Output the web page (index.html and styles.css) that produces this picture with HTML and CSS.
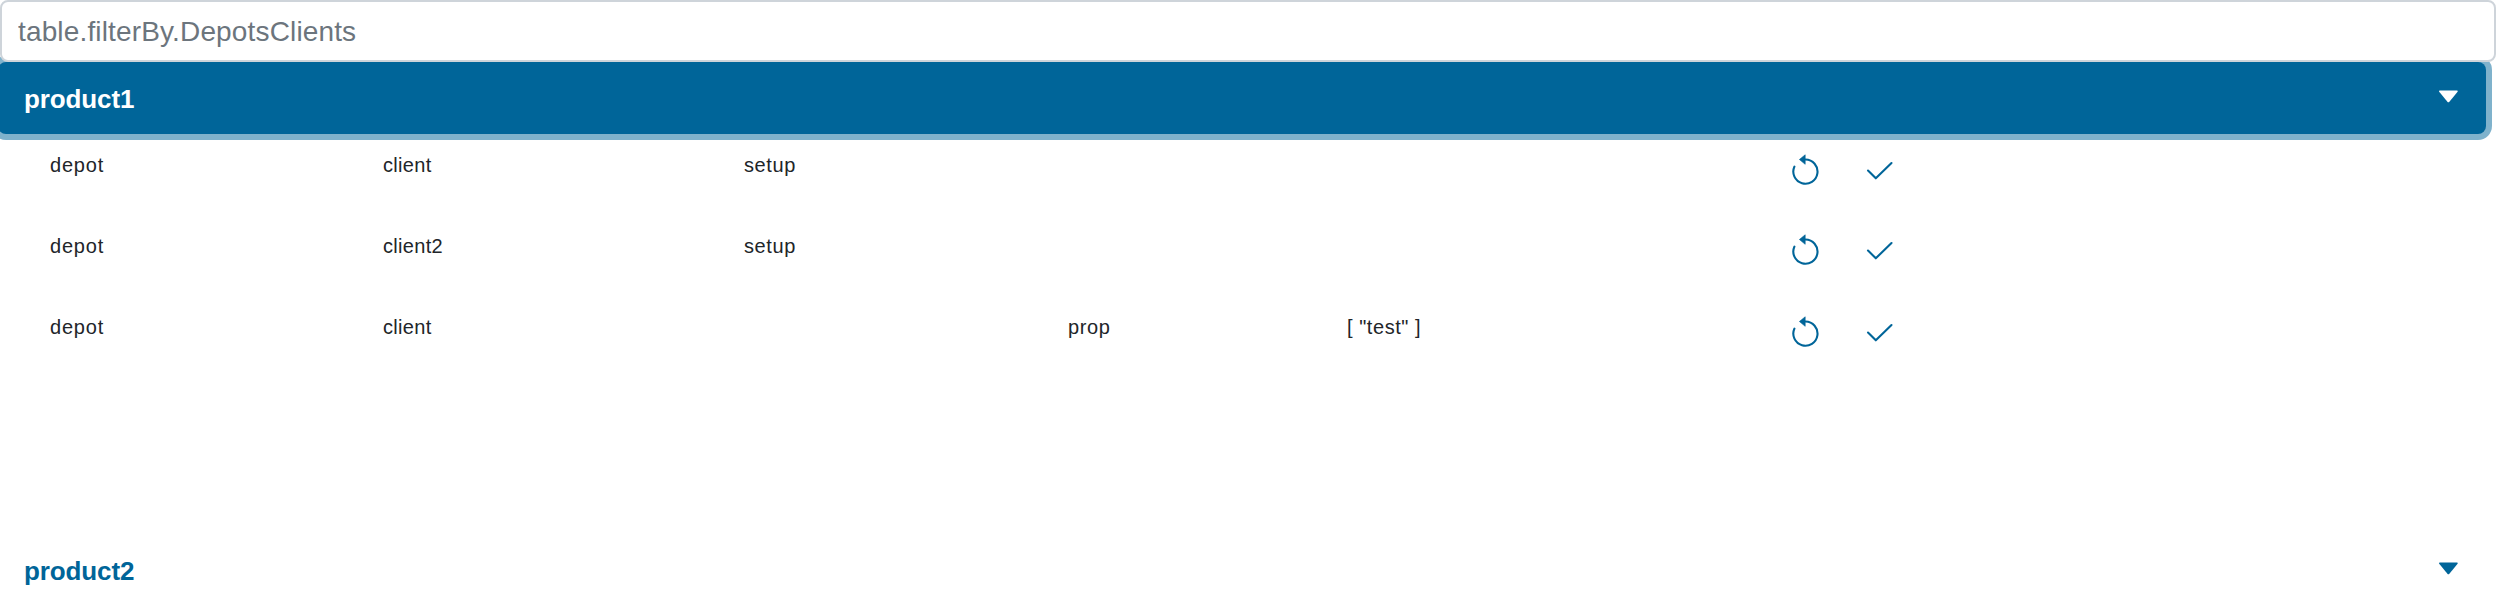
FILE: index.html
```html
<!DOCTYPE html>
<html lang="en">
<head>
<meta charset="utf-8">
<title>Depots and clients</title>
<link rel="stylesheet" href="styles.css">
</head>
<body>
<svg class="defs" aria-hidden="true">
  <symbol id="reset" viewBox="0 0 28 32">
    <path d="M3.4 12.6A12.1 12.1 0 1 0 14.5 5.5" fill="none" stroke="currentColor" stroke-width="2.1" stroke-linecap="round"/>
    <path d="M14.2 .8V10.3L8.4 5.5Z" fill="currentColor" stroke="currentColor" stroke-width=".6" stroke-linejoin="round"/>
  </symbol>
  <symbol id="check" viewBox="0 0 28 20">
    <path d="M2 9.5L9.8 17.3L25.5 2" fill="none" stroke="currentColor" stroke-width="2.1" stroke-linecap="round" stroke-linejoin="round"/>
  </symbol>
  <symbol id="caret" viewBox="0 0 20 14">
    <path d="M1.7 .6H19.1Q20.1 .9 19.4 2.1L11.4 11.8Q10.4 12.9 9.4 11.8L1.4 2.1Q.6 .9 1.7 .6Z" fill="currentColor"/>
  </symbol>
</svg>
<main class="page">
  <input class="filter" type="text" placeholder="table.filterBy.DepotsClients" aria-label="Filter">
  <button class="product product-open" type="button">product1<svg class="caret"><use href="#caret"/></svg></button>
  <div class="rows">
    <div class="row"><span class="depot">depot</span><span>client</span><span class="setup">setup</span><span></span><span></span><svg class="reset"><use href="#reset"/></svg><svg class="check"><use href="#check"/></svg></div>
    <div class="row row-middle"><span class="depot">depot</span><span>client2</span><span class="setup">setup</span><span></span><span></span><svg class="reset"><use href="#reset"/></svg><svg class="check"><use href="#check"/></svg></div>
    <div class="row row-last"><span class="depot">depot</span><span>client</span><span></span><span class="setup">prop</span><span class="value">[ "test" ]</span><svg class="reset"><use href="#reset"/></svg><svg class="check"><use href="#check"/></svg></div>
  </div>
  <button class="product" type="button">product2<svg class="caret"><use href="#caret"/></svg></button>
</main>
</body>
</html>
```
FILE: styles.css
```css
* { box-sizing: border-box; }
body {
  margin: 0;
  background: #fff;
  color: #212529;
  font-family: "Liberation Sans", Arial, sans-serif;
  overflow: hidden;
}
.defs { display: none; }
.page { display: flex; flex-direction: column; height: 606px; }
.filter {
  position: relative;
  z-index: 1;
  flex: none;
  width: 100%;
  height: 62px;
  padding: 2px 16px 0;
  border: 2px solid #ced4da;
  border-radius: 8px;
  background: #fff;
  font: 28px "Liberation Sans", Arial, sans-serif;
  letter-spacing: .15px;
}
.filter::placeholder { color: #6c757d; opacity: 1; }
.product {
  flex: none;
  display: flex;
  align-items: center;
  justify-content: space-between;
  width: 2488px;
  height: 72px;
  margin: 0 0 0 -2px;
  padding: 2px 28px 0 26px;
  border: 0;
  border-radius: 8px;
  background: transparent;
  color: #006599;
  font: bold 26px "Liberation Sans", Arial, sans-serif;
  letter-spacing: -.12px;
}
.product-open {
  background: #006599;
  color: #fff;
  box-shadow: 0 0 0 6px rgba(0, 101, 153, .5);
}
.caret { width: 20px; height: 14px; margin-bottom: 5px; }
.rows { flex: none; height: 400px; padding: 6px 0 0 50px; }
.row {
  display: grid;
  grid-template-columns: 333px 361px 324px 279px 444px 75px 28px;
  align-items: start;
  height: 81px;
  padding-top: 14px;
  font-size: 20px;
  line-height: 23px;
  letter-spacing: .3px;
}
.depot { letter-spacing: .8px; }
.setup { letter-spacing: .6px; }
.value { letter-spacing: .55px; }
.reset { width: 28px; height: 32px; color: #006599; }
.check { width: 28px; height: 20px; margin-top: 7px; color: #006599; }
.row-middle .reset { margin-top: -1px; }
.row-middle .check { margin-top: 6px; }
```
